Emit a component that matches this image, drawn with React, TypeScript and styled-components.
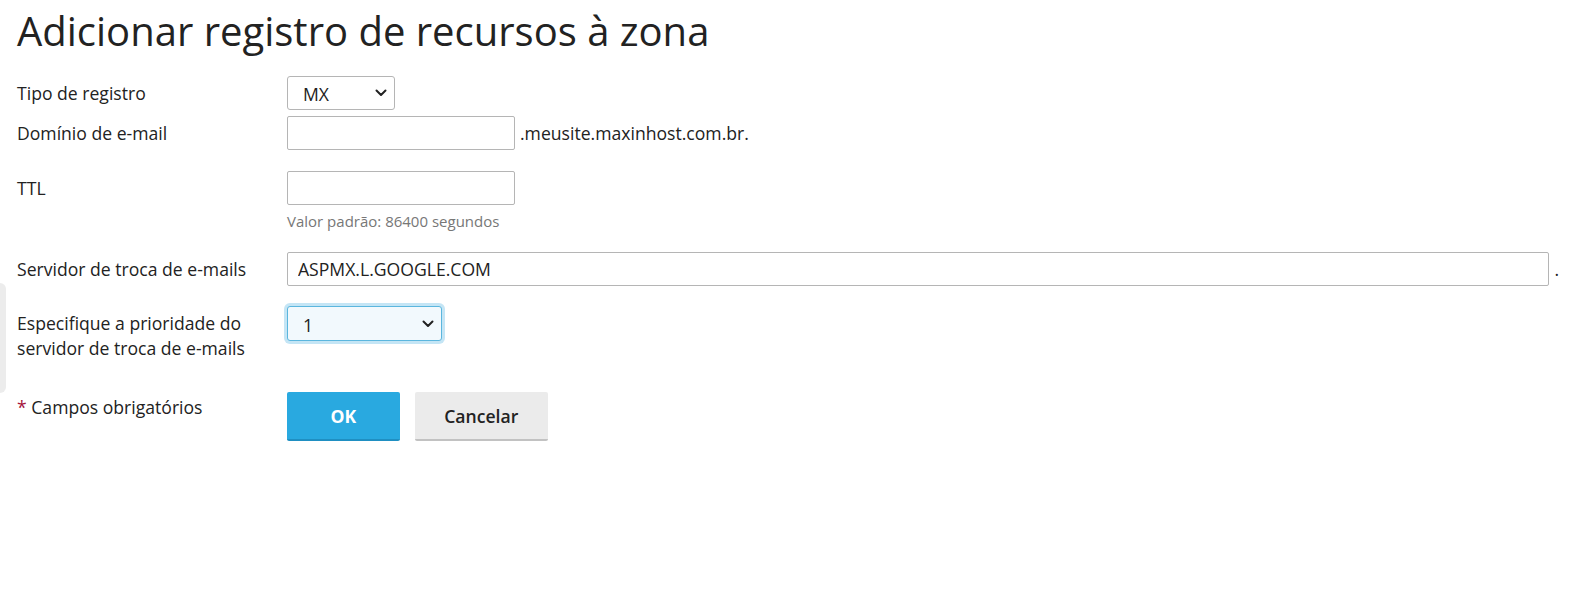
import React from "react";
import styled, { createGlobalStyle } from "styled-components";

const Global = createGlobalStyle`
  html, body { margin: 0; padding: 0; background: #fff; }
  body { font-family: "Open Sans", "Noto Sans", sans-serif; color: #222; }
  * { box-sizing: border-box; }
`;

const Page = styled.div`
  position: relative;
  padding: 8px 11px 0 17px;
  min-height: 607px;
`;

const SideHandle = styled.div`
  position: absolute;
  left: 0;
  top: 283px;
  width: 6px;
  height: 110px;
  background: #ececec;
  border-radius: 0 6px 6px 0;
`;

const Title = styled.h1`
  margin: 0 0 22px;
  font-size: 40px;
  line-height: 46px;
  font-weight: 400;
  color: #222;
`;

const Row = styled.div<{ $gap: number }>`
  display: grid;
  grid-template-columns: 270px 1fr;
  margin-bottom: ${(p) => p.$gap}px;
`;

const Label = styled.div`
  font-size: 17.6px;
  line-height: 25px;
  padding-top: 5px;
  color: #222;
`;

const Field = styled.div`
  display: flex;
  flex-direction: column;
  align-items: flex-start;
`;

const Inline = styled.div<{ $grow?: boolean }>`
  display: flex;
  align-items: center;
  width: ${(p) => (p.$grow ? "100%" : "auto")};
`;

const TextInput = styled.input<{ $width?: number }>`
  height: 34px;
  width: ${(p) => (p.$width ? `${p.$width}px` : "auto")};
  flex: ${(p) => (p.$width ? "none" : "1")};
  min-width: 0;
  border: 1px solid #b5b5b5;
  border-radius: 2px;
  padding: 0 10px;
  font-family: "Open Sans", sans-serif;
  font-size: 17.6px;
  color: #222;
  background: #fff;
  outline: none;
`;

const Suffix = styled.span`
  font-size: 17.6px;
  margin-left: 5px;
  color: #222;
`;

const SelectBox = styled.div<{ $width: number; $focused?: boolean }>`
  position: relative;
  width: ${(p) => p.$width}px;
  height: ${(p) => (p.$focused ? 35 : 34)}px;
  border: 1px solid ${(p) => (p.$focused ? "#5bb6de" : "#b5b5b5")};
  border-radius: 3px;
  background: ${(p) => (p.$focused ? "#f2f9fd" : "#fff")};
  box-shadow: ${(p) => (p.$focused ? "0 0 0 3px #c4e5f5" : "none")};
`;

const Select = styled.select`
  appearance: none;
  -webkit-appearance: none;
  width: 100%;
  height: 100%;
  border: none;
  background: transparent;
  padding: 2px 0 0 15px;
  font-family: "Open Sans", sans-serif;
  font-size: 17.6px;
  color: #222;
  outline: none;
`;

const Chevron = styled.svg`
  position: absolute;
  right: 7px;
  top: 50%;
  margin-top: -4px;
  pointer-events: none;
`;

const Hint = styled.div`
  font-size: 15px;
  line-height: 22px;
  margin-top: 5px;
  color: #777;
`;

const Required = styled.span`
  color: #a5153c;
`;

const Buttons = styled.div`
  display: flex;
  gap: 15px;
  padding-top: 2px;
`;

const Button = styled.button<{ $primary?: boolean }>`
  height: 49px;
  padding: 0 ${(p) => (p.$primary ? 43.5 : 29.5)}px;
  border: none;
  border-radius: 2px;
  border-bottom: 2px solid ${(p) => (p.$primary ? "#1f8fc2" : "#c2c2c2")};
  background: ${(p) => (p.$primary ? "#29a9e0" : "#ebebeb")};
  color: ${(p) => (p.$primary ? "#fff" : "#222")};
  font-family: "Open Sans", sans-serif;
  font-size: 17.6px;
  font-weight: ${(p) => (p.$primary ? 700 : 600)};
  cursor: pointer;
`;

const ChevronIcon = () => (
  <Chevron width="12" height="8" viewBox="0 0 12 8">
    <path d="M1.5 1.5 L6 6 L10.5 1.5" fill="none" stroke="#222" strokeWidth="2" strokeLinecap="round" strokeLinejoin="round" />
  </Chevron>
);

export default function App() {
  return (
    <>
      <Global />
      <Page>
        <SideHandle />
        <Title>Adicionar registro de recursos à zona</Title>

        <Row $gap={6}>
          <Label>Tipo de registro</Label>
          <Field>
            <SelectBox $width={108}>
              <Select defaultValue="MX">
                <option>A</option>
                <option>MX</option>
                <option>CNAME</option>
              </Select>
              <ChevronIcon />
            </SelectBox>
          </Field>
        </Row>

        <Row $gap={21}>
          <Label>Domínio de e-mail</Label>
          <Field>
            <Inline>
              <TextInput $width={228} defaultValue="" />
              <Suffix>.meusite.maxinhost.com.br.</Suffix>
            </Inline>
          </Field>
        </Row>

        <Row $gap={20}>
          <Label>TTL</Label>
          <Field>
            <TextInput $width={228} defaultValue="" />
            <Hint>Valor padrão: 86400 segundos</Hint>
          </Field>
        </Row>

        <Row $gap={20}>
          <Label>Servidor de troca de e-mails</Label>
          <Field>
            <Inline $grow>
              <TextInput defaultValue="ASPMX.L.GOOGLE.COM" />
              <Suffix>.</Suffix>
            </Inline>
          </Field>
        </Row>

        <Row $gap={29}>
          <Label>
            Especifique a prioridade do
            <br />
            servidor de troca de e-mails
          </Label>
          <Field>
            <SelectBox $width={155} $focused>
              <Select defaultValue="1">
                <option>0</option>
                <option>1</option>
                <option>5</option>
                <option>10</option>
              </Select>
              <ChevronIcon />
            </SelectBox>
          </Field>
        </Row>

        <Row $gap={0}>
          <Label>
            <Required>*</Required> Campos obrigatórios
          </Label>
          <Field>
            <Buttons>
              <Button $primary>OK</Button>
              <Button>Cancelar</Button>
            </Buttons>
          </Field>
        </Row>
      </Page>
    </>
  );
}
